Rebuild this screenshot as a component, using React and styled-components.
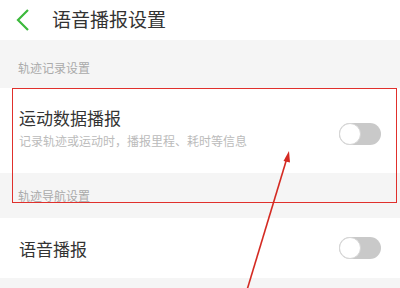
import styled, { createGlobalStyle } from 'styled-components';

const Global = createGlobalStyle`
  html, body { margin: 0; padding: 0; }
  body {
    width: 400px;
    height: 288px;
    overflow: hidden;
    background: #f5f5f5;
    font-family: "Noto Sans CJK SC", "Noto Sans", sans-serif;
  }
`;

const Page = styled.div`
  position: relative;
  width: 400px;
  height: 288px;
  overflow: hidden;
  background: #f5f5f5;
`;

const Header = styled.div`
  height: 40px;
  display: flex;
  align-items: center;
  background: #fff;
  padding-left: 14px;
  gap: 20px;
`;

const Title = styled.div`
  font-size: 19px;
  color: #333;
  line-height: 1;
  margin-top: -4px;
`;

const SectionLabel = styled.div`
  height: ${(p) => p.h}px;
  box-sizing: border-box;
  padding: ${(p) => p.pt}px 0 0 18px;
  font-size: 12px;
  color: #aaa;
  line-height: 1;
`;

const Row = styled.div`
  height: ${(p) => p.h}px;
  background: #fff;
  display: flex;
  align-items: center;
  justify-content: space-between;
  padding: 0 19px 0 19px;
  box-sizing: border-box;
`;

const Texts = styled.div`
  display: flex;
  flex-direction: column;
  gap: 9px;
  margin-top: ${(p) => p.mt || 0}px;
`;

const RowTitle = styled.div`
  font-size: 17px;
  color: #333;
  line-height: 1;
`;

const RowSub = styled.div`
  font-size: 12px;
  color: #bbb;
  line-height: 1;
`;

const Toggle = styled.div`
  width: 42px;
  height: 22px;
  border-radius: 11px;
  background: #c9c9c9;
  position: relative;
  margin-top: ${(p) => p.mt || 0}px;
  &::after {
    content: '';
    position: absolute;
    left: 0;
    top: 0;
    width: 22px;
    height: 22px;
    box-sizing: border-box;
    border-radius: 50%;
    background: #fff;
    border: 1px solid #d6d6d6;
  }
`;

const Highlight = styled.div`
  position: absolute;
  left: 12px;
  top: 88px;
  width: 385px;
  height: 115px;
  box-sizing: border-box;
  border: 1.5px solid #e0302c;
  pointer-events: none;
`;

const Arrow = styled.svg`
  position: absolute;
  left: 0;
  top: 0;
  pointer-events: none;
`;

export default function App() {
  return (
    <Page>
      <Global />
      <Header>
        <svg width="18" height="24" viewBox="0 0 18 24">
          <path d="M14 2 L4 12 L14 22" fill="none" stroke="#3cb93c" strokeWidth="2.2" />
        </svg>
        <Title>语音播报设置</Title>
      </Header>
      <SectionLabel h={48} pt={22}>轨迹记录设置</SectionLabel>
      <Row h={85}>
        <Texts mt={-6}>
          <RowTitle>运动数据播报</RowTitle>
          <RowSub>记录轨迹或运动时，播报里程、耗时等信息</RowSub>
        </Texts>
        <Toggle mt={6} />
      </Row>
      <SectionLabel h={45} pt={17}>轨迹导航设置</SectionLabel>
      <Row h={60}>
        <RowTitle>语音播报</RowTitle>
        <Toggle />
      </Row>
      <Highlight />
      <Arrow width="400" height="288" viewBox="0 0 400 288">
        <line x1="287" y1="158" x2="247" y2="290" stroke="#d42a22" strokeWidth="1.6" />
        <path d="M289 151 L283.5 161 L290 162.5 Z" fill="#d42a22" />
      </Arrow>
    </Page>
  );
}
